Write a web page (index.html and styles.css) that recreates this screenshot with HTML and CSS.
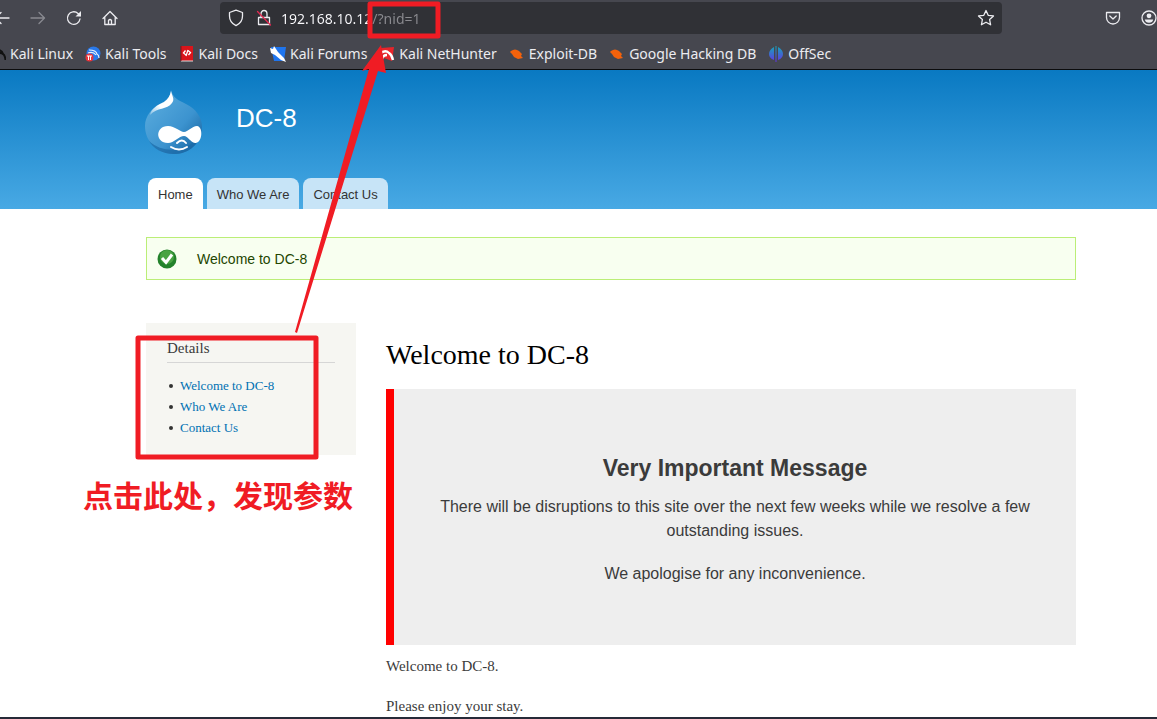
FILE: index.html
```html
<!DOCTYPE html>
<html lang="en">
<head>
<meta charset="utf-8">
<title>Welcome to DC-8</title>
<link rel="stylesheet" href="styles.css">
</head>
<body>
<div class="window">
  <div class="browser">
    <div class="toolbar">
      <div class="nav-buttons">
        <button class="tool" aria-label="Back"><svg width="16" height="16" viewBox="0 0 16 16"><path d="M15 8H2M7 2.500L1.500 8L7 13.500"/></svg></button>
        <button class="tool dim" aria-label="Forward"><svg width="16" height="16" viewBox="0 0 16 16"><path d="M1 8H14M9 2.500L14.500 8L9 13.500"/></svg></button>
        <button class="tool" aria-label="Reload"><svg width="16" height="16" viewBox="0 0 16 16"><path d="M14 9A6.300 6.300 0 1 1 12 3.400L14 5.500"/><path class="solid" d="M15 1V6.500H9.500Z"/></svg></button>
        <button class="tool" aria-label="Home page"><svg width="16" height="16" viewBox="0 0 16 16"><path d="M1 8.500L8 1.500L15 8.500M2.800 7V14.500H13.200V7M6.500 14.500V10.500Q8 8.500 9.500 10.500V14.500"/></svg></button>
      </div>
      <div class="address">
        <svg width="16" height="18" viewBox="0 0 16 18"><path d="M8 1.200L14.500 3.500V7C14.500 12 11.500 15 8 16.700C4.500 15 1.500 12 1.500 7V3.500Z"/></svg>
        <svg width="16" height="18" viewBox="0 0 16 18"><path d="M2.500 8.500H13.500V15.500H2.500ZM5 8V5A3 3.500 0 0 1 11 5V8"/><path class="slash" d="M1.500 2.500L14.500 16"/></svg>
        <input class="url" type="text" aria-label="Address" value="192.168.10.12/?nid=1">
        <button class="tool" aria-label="Bookmark this page"><svg width="18" height="18" viewBox="0 0 18 18"><path d="M9 1.500L11.200 6.300L16.500 6.900L12.600 10.500L13.600 15.800L9 13.200L4.400 15.800L5.400 10.500L1.500 6.900L6.800 6.300Z"/></svg></button>
      </div>
      <div class="side-buttons">
        <button class="tool" aria-label="Pocket"><svg width="16" height="16" viewBox="0 0 16 16"><path d="M1.500 2.500H14.500V7.500A6.500 6.500 0 0 1 1.500 7.500ZM4.800 6L8 9L11.200 6"/></svg></button>
        <button class="tool" aria-label="Account"><svg width="16" height="16" viewBox="0 0 16 16"><circle cx="8" cy="8" r="7"/><circle class="solid" cx="8" cy="5.800" r="2.400"/><path class="solid" d="M3.800 9.500H12.200Q11.500 12.800 8 12.800T3.800 9.500Z"/></svg></button>
      </div>
    </div>
    <nav class="bookmarks" aria-label="Bookmarks">
      <a href="#"><svg width="16" height="16" viewBox="0 0 16 16"><path d="M5 3Q12 4 13 8Q15 9 15.500 14M5 8Q10 6 13 8" fill="none" stroke="#111" stroke-width="2"/></svg>Kali Linux</a>
      <a href="#"><svg width="16" height="16" viewBox="0 0 16 16"><circle cx="8.500" cy="7.500" r="7" fill="#2979ea"/><path d="M4 4Q11 4 12 8Q14 9 14 12M3 7Q8 5 11 9" fill="none" stroke="#e7f1ff" stroke-width="1.200"/><circle cx="4.500" cy="11.500" r="4" fill="#e8353b"/><path d="M2 10H7M3.500 10V14M5.500 10V14" stroke="#fff"/></svg>Kali Tools</a>
      <a href="#"><svg width="16" height="16" viewBox="0 0 16 16"><path fill="#d9151b" d="M2 0H14V15H2Z"/><path d="M2 15H14" stroke="#ddd" stroke-width="1"/><path d="M2 0V15" stroke="#8c1117"/><path d="M6.500 4.500L4.500 7L7 9M9 4.500L11.500 6.500L9.500 9M9 4L7 10" fill="none" stroke="#fff" stroke-width="1.300"/></svg>Kali Docs</a>
      <a href="#"><svg width="16" height="16" viewBox="0 0 16 16"><path fill="#1f75ee" d="M1 1H16L14 15H4Z"/><path fill="#fff" d="M0 2L3 3L4 0L8 6L14 12L16 16L11 14L5 9L1 7Z"/></svg>Kali Forums</a>
      <a href="#"><svg width="16" height="16" viewBox="0 0 16 16"><path fill="#e8252b" d="M2 2L15 1L13 15L5 12Z"/><path d="M1 8Q6 3 10 7Q13 9 14 14M3 13Q4 9 8 9" fill="none" stroke="#fff" stroke-width="2.400"/></svg>Kali NetHunter</a>
      <a href="#"><svg width="16" height="16" viewBox="0 0 16 16"><path fill="#f4620b" d="M2 5Q6 2 10 5L13 8L12 10L14 12L9 13L5 11L3 8L1 6Z"/></svg>Exploit-DB</a>
      <a href="#"><svg width="16" height="16" viewBox="0 0 16 16"><path fill="#f4620b" d="M2 5Q6 2 10 5L13 8L12 10L14 12L9 13L5 11L3 8L1 6Z"/></svg>Google Hacking DB</a>
      <a href="#"><svg width="16" height="16" viewBox="0 0 16 16"><defs><linearGradient id="off" x2="0" y2="1"><stop stop-color="#14a7b8"/><stop offset="1" stop-color="#6432e6"/></linearGradient></defs><path fill="url(#off)" d="M6 1V14Q1 12 1 8T6 1ZM7.500 0H8.500V16H7.500ZM10 1V14Q15 12 15 8T10 1Z"/></svg>OffSec</a>
    </nav>
  </div>

  <header class="site-header">
    <div class="brand">
      <svg class="logo" width="60" height="66" viewBox="0 0 60 66">
        <defs>
          <linearGradient id="drop" x1="0" y1="0" x2="1" y2="1"><stop stop-color="#5fb0e0"/><stop offset=".6" stop-color="#3c93cf"/><stop offset="1" stop-color="#0f5c98"/></linearGradient>
          <linearGradient id="shine" x1="1" y1="0" x2="0" y2="1"><stop stop-color="#fff"/><stop offset=".6" stop-color="#fff"/><stop offset="1" stop-color="#fff" stop-opacity=".3"/></linearGradient>
        </defs>
        <path fill="url(#drop)" d="M27 1C29 9 34 11 42 15C52 20 58 28 58 38C58 54 45 65 30 65C14 65 1 53 1 37C1 27 8 19 16 15C22 12 26 9 27 1Z"/>
        <path fill="#1b69a6" opacity=".7" d="M57 42C55 57 43 65 30 65C18 65 9 59 5 52C14 60 25 62 34 60C46 58 53 52 57 42Z"/>
        <path fill="url(#shine)" d="M27 2C28 7 31 10 28 14C23 21 13 18 6 26C7 20 13 16 20 13C24 10 26 7 27 2Z"/>
        <path fill="#fff" d="M24 37C31 37 36 43 40 43C44 43 48 37 53 37C60 38 58 55 51 54C46 53 44 47 40 47C35 47 30 54 24 54C11 54 11 37 24 37Z"/>
        <path fill="none" stroke="#fff" stroke-width="2" stroke-linecap="round" d="M33 54Q38 49 42 54M27 58Q35 63 43 58"/>
      </svg>
      <a class="site-name" href="#">DC-8</a>
    </div>
    <nav class="tabs" aria-label="Main menu">
      <a class="tab active" href="#">Home</a>
      <a class="tab" href="#">Who We Are</a>
      <a class="tab" href="#">Contact Us</a>
    </nav>
  </header>

  <div class="page">
    <div class="status">
      <svg width="20" height="20" viewBox="0 0 20 20"><circle cx="10" cy="10" r="9.500" fill="#23822b"/><circle cx="10" cy="8" r="7" fill="#49a343"/><path d="M5 9L9 13.500L15 5.500" fill="none" stroke="#fff" stroke-width="3"/></svg>
      <span>Welcome to DC-8</span>
    </div>
    <div class="columns">
      <aside class="sidebar">
        <h2>Details</h2>
        <ul>
          <li><a href="#">Welcome to DC-8</a></li>
          <li><a href="#">Who We Are</a></li>
          <li><a href="#">Contact Us</a></li>
        </ul>
      </aside>
      <main class="content">
        <h1>Welcome to DC-8</h1>
        <section class="notice">
          <h3>Very Important Message</h3>
          <p>There will be disruptions to this site over the next few weeks while we resolve a few outstanding issues.</p>
          <p>We apologise for any inconvenience.</p>
        </section>
        <p>Welcome to DC-8.</p>
        <p>Please enjoy your stay.</p>
      </main>
    </div>
  </div>

  <svg class="marks" width="460" height="470" viewBox="0 0 460 470" aria-hidden="true">
    <rect x="370" y="4" width="68" height="32"/>
    <rect x="138" y="338" width="178" height="119"/>
    <path d="M381 45L362 71L369 69L295 332L297 333L378 71L386 73Z"/>
  </svg>
  <p class="mark-note" lang="zh">点击此处，发现参数</p>
</div>
</body>
</html>
```
FILE: styles.css
```css
* { box-sizing: border-box; }
body { margin: 0; font-family: "Liberation Serif", serif; color: #3b3b3b; background: #fff; }
h1, h2, h3, p, ul { margin: 0; padding: 0; font-weight: normal; }
a { text-decoration: none; }

.window { position: relative; min-height: 100vh; overflow: hidden; border-bottom: 2px solid #262a38; }

.browser { background: #46474f; border-bottom: 1px solid #0c0c0d; color: #ececf0; font: 14px "Noto Sans", sans-serif; }
.toolbar { display: flex; align-items: center; height: 36px; }
.toolbar svg { display: block; fill: none; stroke: #ececf0; stroke-width: 1.3; stroke-linejoin: round; stroke-linecap: round; }
.toolbar .solid { fill: #ececf0; stroke: none; }
.toolbar .slash { stroke: #e22850; }
.tool { padding: 0; border: 0; background: none; }
.dim { opacity: .4; }
.nav-buttons { display: flex; gap: 20px; width: 220px; margin-left: -6px; }
.address { display: flex; flex: 1; align-items: center; gap: 12px; height: 32px; margin-left: 6px; padding: 0 7px 0 8px; background: #303136; border-radius: 4px; }
.url { flex: 1; min-width: 0; margin-left: -3px; padding: 0; border: 0; outline: 0; font: inherit; color: transparent; background: linear-gradient(90deg, #fbfbfe 91px, #8b8b90 91px); -webkit-background-clip: text; background-clip: text; }
.side-buttons { display: flex; justify-content: flex-end; gap: 20px; width: 155px; }

.bookmarks { display: flex; align-items: center; gap: 12px; height: 33px; margin-left: -10px; padding-top: 2px; }
.bookmarks a { display: flex; align-items: center; gap: 4px; color: #ececf0; white-space: nowrap; }

.site-header { height: 139px; padding: 19px 81px 0 144px; background: linear-gradient(#0979c2, #48a9e4); }
.brand { display: flex; gap: 32px; height: 89px; }
.site-name { padding-top: 14px; color: #fff; font: 26px/30px "Liberation Sans", sans-serif; }
.tabs { display: flex; gap: 4px; padding-left: 4px; }
.tab { height: 31px; padding: 0 10px; border-radius: 8px 8px 0 0; background: #c7e4f7; color: #333; font: 13px/33px "Liberation Sans", sans-serif; }
.tab.active { background: #fff; }

.page { padding: 28px 81px 0 146px; }
.status { display: flex; align-items: center; gap: 20px; height: 43px; padding-left: 10px; border: 1px solid #be7; background: #f8fff0; color: #234600; font: 14px "Liberation Sans", sans-serif; }
.columns { display: flex; align-items: flex-start; gap: 30px; padding-top: 43px; }
.sidebar { width: 210px; padding: 15px 21px 17px; background: #f6f6f2; }
.sidebar h2 { padding-bottom: 4px; border-bottom: 1px solid #d6d6d6; font-size: 15px; line-height: 20px; }
.sidebar ul { padding: 12px 0 0 2px; list-style: none; font-size: 13px; line-height: 21px; }
.sidebar li { display: flex; align-items: center; gap: 7px; }
.sidebar li::before { content: ""; width: 4px; height: 4px; border-radius: 50%; background: #333; }
.sidebar a { color: #0071b3; }
.content { flex: 1; font-size: 15px; line-height: 20px; }
.content h1 { padding-top: 14px; color: #000; font-size: 28px; line-height: 36px; }
.notice { margin: 16px 0 11px; padding: 64px 40px 59px; border-left: 8px solid #f00; background: #eee; font: 16px/24px "Liberation Sans", sans-serif; text-align: center; }
.notice h3 { padding-bottom: 11px; font-size: 23px; font-weight: bold; line-height: 31px; }
.notice p + p { margin-top: 19px; }
.content > p + p { margin-top: 20px; }

.marks { position: absolute; top: 0; left: 0; fill: #f01c24; }
.marks rect { fill: none; stroke: #f01c24; stroke-width: 5; stroke-linejoin: round; }
.mark-note { position: absolute; top: 474px; left: 83px; color: #f01c24; font: bold 30px/40px "Noto Sans CJK SC", sans-serif; }
```
